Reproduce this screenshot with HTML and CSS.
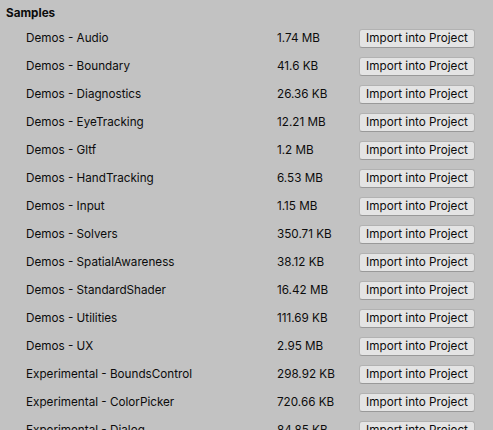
FILE: index.html
```html
<!DOCTYPE html>
<html>
<head>
<meta charset="utf-8">
<link rel="stylesheet" href="styles.css">
</head>
<body>
<div class="panel">
  <div class="header">Samples</div>
  <div class="list">
    <div class="row"><span class="name">Demos - Audio</span><span class="size">1.74 MB</span><button class="btn">Import into Project</button></div>
    <div class="row"><span class="name">Demos - Boundary</span><span class="size">41.6 KB</span><button class="btn">Import into Project</button></div>
    <div class="row"><span class="name">Demos - Diagnostics</span><span class="size">26.36 KB</span><button class="btn">Import into Project</button></div>
    <div class="row"><span class="name">Demos - EyeTracking</span><span class="size">12.21 MB</span><button class="btn">Import into Project</button></div>
    <div class="row"><span class="name">Demos - Gltf</span><span class="size">1.2 MB</span><button class="btn">Import into Project</button></div>
    <div class="row"><span class="name">Demos - HandTracking</span><span class="size">6.53 MB</span><button class="btn">Import into Project</button></div>
    <div class="row"><span class="name">Demos - Input</span><span class="size">1.15 MB</span><button class="btn">Import into Project</button></div>
    <div class="row"><span class="name">Demos - Solvers</span><span class="size">350.71 KB</span><button class="btn">Import into Project</button></div>
    <div class="row"><span class="name">Demos - SpatialAwareness</span><span class="size">38.12 KB</span><button class="btn">Import into Project</button></div>
    <div class="row"><span class="name">Demos - StandardShader</span><span class="size">16.42 MB</span><button class="btn">Import into Project</button></div>
    <div class="row"><span class="name">Demos - Utilities</span><span class="size">111.69 KB</span><button class="btn">Import into Project</button></div>
    <div class="row"><span class="name">Demos - UX</span><span class="size">2.95 MB</span><button class="btn">Import into Project</button></div>
    <div class="row"><span class="name">Experimental - BoundsControl</span><span class="size">298.92 KB</span><button class="btn">Import into Project</button></div>
    <div class="row"><span class="name">Experimental - ColorPicker</span><span class="size">720.66 KB</span><button class="btn">Import into Project</button></div>
    <div class="row"><span class="name">Experimental - Dialog</span><span class="size">84.85 KB</span><button class="btn">Import into Project</button></div>
  </div>
</div>
</body>
</html>
```
FILE: styles.css
```css
html, body {
  margin: 0;
  padding: 0;
  background: #c2c2c2;
  overflow: hidden;
}
.panel {
  width: 493px;
  height: 430px;
  overflow: hidden;
  font-family: Inter, "Noto Sans", sans-serif;
  font-size: 11.7px;
  color: #0c0c0c;
}
.header {
  height: 24px;
  padding-left: 6px;
  display: flex;
  align-items: center;
  font-weight: 700;
  padding-top: 1px;
  box-sizing: border-box;
}
.row {
  height: 28px;
  display: grid;
  grid-template-columns: 251px 82px 116px;
  padding-left: 26px;
  align-items: center;
}
.btn {
  height: 19px;
  width: 116px;
  padding: 0;
  margin: 0;
  font-family: inherit;
  font-size: 11.7px;
  color: #0c0c0c;
  background: #e4e4e4;
  border: 1px solid #b2b2b2;
  border-bottom-color: #999;
  border-radius: 3px;
  line-height: 17px;
}
```
